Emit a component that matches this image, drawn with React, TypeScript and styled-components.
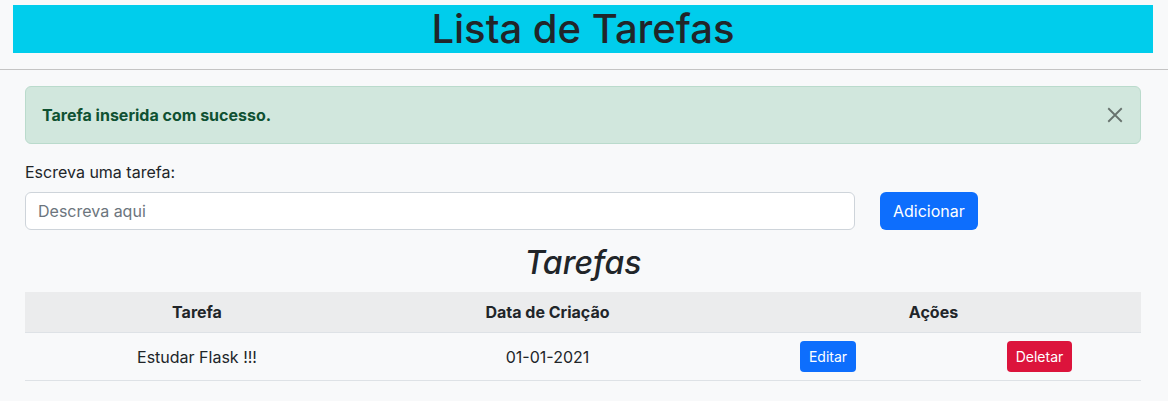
import styled, { createGlobalStyle } from "styled-components";

const GlobalStyle = createGlobalStyle`
  * { box-sizing: border-box; }
  body {
    margin: 0;
    background: #f8f9fa;
    color: #212529;
    font-family: Inter, "Noto Sans", sans-serif;
    font-size: 16px;
    line-height: 1.5;
  }
`;

const Page = styled.div`
  padding-top: 5px;
`;

const Banner = styled.h1`
  margin: 0 15px 0 13px;
  background: #00cdec;
  color: #212529;
  font-size: 40px;
  font-weight: 500;
  line-height: 48px;
  text-align: center;
`;

const Rule = styled.hr`
  margin: 16px 0 0;
  border: 0;
  border-top: 1px solid #c4c4c4;
`;

const Container = styled.main`
  padding: 16px 27px 0 25px;
`;

const Alert = styled.div`
  display: flex;
  align-items: center;
  justify-content: space-between;
  padding: 16px;
  background: #d1e7dd;
  border: 1px solid #badbcc;
  border-radius: 6px;
  color: #0f5132;
  font-weight: 700;
  margin-bottom: 16px;
`;

const Close = styled.button`
  display: flex;
  padding: 0;
  border: 0;
  background: none;
  color: #000;
  opacity: 0.5;
`;

const Label = styled.label`
  display: block;
  margin-bottom: 8px;
`;

const FormRow = styled.form`
  display: flex;
  gap: 25px;
  align-items: flex-start;
`;

const Input = styled.input`
  width: 830px;
  height: 38px;
  padding: 6px 12px;
  border: 1px solid #ced4da;
  border-radius: 6px;
  background: #fff;
  font: inherit;
  color: #212529;
  &::placeholder { color: #6c757d; }
`;

const Button = styled.button<{ $tone?: "primary" | "danger"; $small?: boolean }>`
  border: 0;
  border-radius: ${(p) => (p.$small ? "4px" : "6px")};
  background: ${(p) => (p.$tone === "danger" ? "#dc143c" : "#0d6efd")};
  color: #fff;
  font-family: inherit;
  font-size: ${(p) => (p.$small ? "14px" : "16px")};
  line-height: 1.5;
  padding: ${(p) => (p.$small ? "5px 9px" : "7px 13px")};
`;

const Heading = styled.h2`
  margin: 14px 0 10px;
  font-size: 32px;
  font-weight: 500;
  font-style: italic;
  line-height: 38px;
  text-align: center;
`;

const Table = styled.table`
  width: 1116px;
  border-collapse: collapse;
  table-layout: fixed;
`;

const Th = styled.th`
  background: #ebeced;
  padding: 8px;
  font-weight: 700;
  text-align: center;
  border-bottom: 1px solid #dee2e6;
`;

const Td = styled.td<{ $shift?: number }>`
  padding: 8px;
  padding-left: ${(p) => 8 + (p.$shift ?? 0)}px;
  text-align: center;
  vertical-align: middle;
  height: 48px;
  border-bottom: 1px solid #dee2e6;
`;

export default function App() {
  return (
    <Page>
      <GlobalStyle />
      <Banner>Lista de Tarefas</Banner>
      <Rule />
      <Container>
        <Alert>
          <span>Tarefa inserida com sucesso.</span>
          <Close type="button" aria-label="Fechar">
            <svg width="18" height="18" viewBox="0 0 16 16" fill="none" stroke="currentColor" strokeWidth="1.6">
              <path d="M2 2l12 12M14 2L2 14" />
            </svg>
          </Close>
        </Alert>
        <Label htmlFor="tarefa">Escreva uma tarefa:</Label>
        <FormRow>
          <Input id="tarefa" placeholder="Descreva aqui" />
          <Button type="button">Adicionar</Button>
        </FormRow>
        <Heading>Tarefas</Heading>
        <Table>
          <colgroup>
            <col style={{ width: 344 }} />
            <col style={{ width: 357 }} />
            <col style={{ width: 204 }} />
            <col style={{ width: 211 }} />
          </colgroup>
          <thead>
            <tr>
              <Th>Tarefa</Th>
              <Th>Data de Criação</Th>
              <Th colSpan={2}>Ações</Th>
            </tr>
          </thead>
          <tbody>
            <tr>
              <Td>Estudar Flask !!!</Td>
              <Td>01-01-2021</Td>
              <Td>
                <Button $small type="button">Editar</Button>
              </Td>
              <Td $shift={8}>
                <Button $small $tone="danger" type="button">Deletar</Button>
              </Td>
            </tr>
          </tbody>
        </Table>
      </Container>
    </Page>
  );
}
